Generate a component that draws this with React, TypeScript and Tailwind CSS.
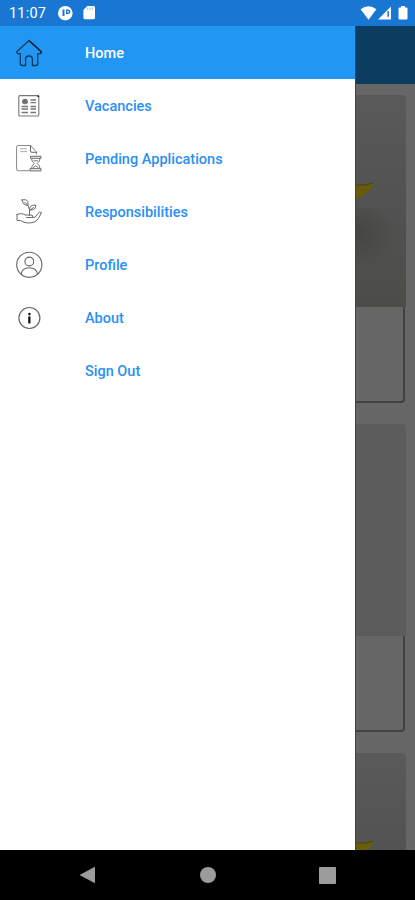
import React from "react";
import clsx from "clsx";

const HomeIcon = () => (
  <svg
    viewBox="0 0 30 30"
    className="w-[30px] h-[30px]"
    fill="none"
    stroke="#0d3c61"
    strokeWidth="1.3"
    strokeLinejoin="round"
  >
    <path d="M15 2.5 L3 13.4 Q2.2 14.8 3.6 15.6 H6.3 V25.5 Q6.3 27.5 8.3 27.5 H11.6 V20.5 Q11.8 18 15 18 Q18.2 18 18.4 20.5 V27.5 H21.7 Q23.7 27.5 23.7 25.500 V15.6 H26.4 Q27.8 14.8 27 13.4 Z" />
    <path d="M15 2.5 L27 13.4 Q27.8 14.8 26.4 15.6" stroke="#0a2338" />
  </svg>
);

const VacanciesIcon = () => (
  <svg
    viewBox="0 0 30 30"
    className="w-[30px] h-[30px]"
    fill="none"
    stroke="#777"
    strokeWidth="1.1"
  >
    <rect x="4.8" y="4.6" width="20" height="20.4" rx="1" />
    <circle cx="11" cy="10.5" r="2.3" fill="#666" />
    <path
      d="M8 11h6M16.5 9h5.5M16.5 11.6h5.5M7.5 15.5h6.5M16.5 15.5h5.5M7.5 18h6.5M16.5 18h5.5M7.5 21.5h6.5M16.5 21.5h5.500"
      strokeWidth="1.4"
    />
    <path d="M23.500 5.3h1.6" stroke="#111" strokeWidth="1.5" />
  </svg>
);

const PendingIcon = () => (
  <svg
    viewBox="0 0 30 30"
    className="w-[30px] h-[30px]"
    fill="none"
    stroke="#888"
    strokeWidth="1"
  >
    <path d="M15.5 26.700H4.200Q2.600 26.700 2.600 25V3Q2.600 1.500 4.200 1.500H16.500L22.500 8V10.500" />
    <path d="M16.500 1.500V7Q16.500 8.300 18 8.300H22.500" stroke="#666" />
    <path d="M6 4.800h7M6 7.600h7" stroke="#aaa" />
    <path d="M16.500 12.300h10.500v2h-10.500zM16 24.700h11v2.200h-11z" stroke="#666" />
    <path
      d="M17.500 14.300Q17.500 17.500 20.300 19.500Q17.500 21.500 17.500 24.700M26 14.300Q26 17.500 23.200 19.500Q26 21.500 26 24.700M19.500 16.800h4.500M19 23.800l2.700-2 2.700 2"
      stroke="#777"
    />
  </svg>
);

const ResponsibilitiesIcon = () => (
  <svg
    viewBox="0 0 30 30"
    className="w-[30px] h-[30px]"
    fill="none"
    stroke="#6a6a6a"
    strokeWidth="1"
    strokeLinecap="round"
    strokeLinejoin="round"
  >
    <path d="M8 3Q12.500 1.800 13.800 4.500L14 8.300Q9 8.600 8 3zM10.500 5l3.500 3.500 1.500 4V18.500" />
    <path d="M15.500 13Q14.500 8.300 21.500 8Q22.800 13.300 15.500 13zM15.500 13.500l4-3" />
    <path d="M3 17.500Q8 15.600 11 18H17Q20 18.400 18.500 20.500H12.500" />
    <path d="M3 17.500V23.500H6.500Q13 27.700 21 24.800Q24.500 23 27.500 15.500Q25.500 13.800 23.500 17L21 20.400H18.500" />
  </svg>
);

const ProfileIcon = () => (
  <svg
    viewBox="0 0 30 30"
    className="w-[30px] h-[30px]"
    fill="none"
    stroke="#666"
    strokeWidth="1.1"
  >
    <circle cx="15.3" cy="14.8" r="12.6" />
    <circle cx="15.300" cy="11.5" r="4.4" />
    <path d="M7 24.300Q8 17.8 15.3 17.8Q22.6 17.8 23.6 24.3" />
  </svg>
);

const AboutIcon = () => (
  <svg viewBox="0 0 30 30" className="w-[30px] h-[30px]" fill="none">
    <circle cx="15.4" cy="15" r="10.5" stroke="#666" strokeWidth="1.2" />
    <circle cx="15.4" cy="11.1" r="1.3" fill="#111" />
    <path d="M14.200 13.4h2.3v7h-2.300z" fill="#111" />
  </svg>
);

const menuItems = [
  { label: "Home", icon: <HomeIcon />, active: true },
  { label: "Vacancies", icon: <VacanciesIcon /> },
  { label: "Pending Applications", icon: <PendingIcon /> },
  { label: "Responsibilities", icon: <ResponsibilitiesIcon /> },
  { label: "Profile", icon: <ProfileIcon /> },
  { label: "About", icon: <AboutIcon /> },
  { label: "Sign Out", icon: null },
];

const StatusBar = () => (
  <header className="flex h-[26px] shrink-0 items-center justify-between bg-[#1976d2] pl-[9px] pr-[7px] text-white">
    <div className="flex items-center">
      <span className="w-[49px] pt-[2px] text-[14.5px] leading-[26px] tracking-[0.2px]">11:07</span>
      <svg viewBox="0 0 16 16" className="w-4 h-4">
        <circle cx="7.3" cy="8.2" r="7.3" fill="#fff" />
        <path d="M4.500 4.500h2v6.500h-2zM8 4.500h2q2.500.2 2.500 2.200t-2.500 2.300h-2z" fill="#1976d2" />
        <path d="M9.300 5.900h1.500v1.500h-1.500z" fill="#fff" />
      </svg>
      <svg viewBox="0 0 14 16" className="ml-[9px] w-3.5 h-4">
        <path d="M4.200 1H10.500Q12 1 12 2.500V12.800Q12 14.200 10.500 14.200H1.800Q.4 14.200.4 12.800V5z" fill="#fff" />
        <path d="M4.700 2.600v2.200M7 2.600v2.200M9.300 2.600v2.200" stroke="#8ab9ea" />
      </svg>
    </div>
    <div className="flex items-center">
      <svg viewBox="0 0 17 16" className="w-[17px] h-4">
        <path d="M.6 4.200Q8.500-1.500 16.400 4.200L8.500 14.800z" fill="#fff" />
      </svg>
      <svg viewBox="0 0 14 16" className="ml-px w-3.5 h-4">
        <path d="M13 1.500V14.500H0z" fill="#fff" />
        <path d="M10.200 6v5.800" stroke="#1976d2" strokeWidth="1.500" />
      </svg>
      <svg viewBox="0 0 10 16" className="ml-[6px] w-2.5 h-4">
        <path d="M3 1h4v1.500h1.500q1 0 1 1V13.500q0 1-1 1h-7q-1 0-1-1V3.500q0-1 1-1H3z" fill="#fff" />
      </svg>
    </div>
  </header>
);

const Drawer = () => (
  <nav className="w-[355px] shrink-0 bg-white">
    {menuItems.map((item) => (
      <div
        key={item.label}
        className={clsx(
          "flex h-[53px] items-center pl-[14px] text-[14.5px] font-medium",
          item.active ? "bg-[#2196f3] text-white" : "text-[#2b90f3]"
        )}
      >
        <div className="w-[71px]">{item.icon}</div>
        <span className="pt-[2px]">{item.label}</span>
      </div>
    ))}
  </nav>
);

const Petal = () => (
  <svg viewBox="0 0 20 26" className="w-5 h-[26px]">
    <path d="M0 3.500Q10 4.500 17.500 1.500Q16.500 8 10 12Q5 15 0 19z" fill="#685b0b" />
    <path d="M0 4Q10 5 17 2" stroke="#4c430c" strokeWidth="1" fill="none" />
  </svg>
);

const Card = ({ photo = false }: { photo?: boolean }) => (
  <div className="mb-[21px] w-[50px] shrink-0">
    <div
      className={clsx(
        "h-[212px] w-[50px] rounded-tr-sm",
        photo
          ? "bg-linear-to-b from-[#5a5a5a] via-[#525252] to-[#4c4d48] pt-[86px]"
          : "bg-[#5c5c5c]"
      )}
    >
      {photo && (
        <>
          <Petal />
          <div className="mt-px h-[80px] w-[48px] bg-radial-[40px_34px_at_0%_32%] from-[#454541] to-transparent" />
        </>
      )}
    </div>
    <div className="h-[96px] w-[49px] rounded-br-sm border-r-2 border-b-2 border-[#424242] bg-[#666]" />
  </div>
);

const App = () => {
  return (
    <div className="flex h-[900px] w-[415px] flex-col overflow-hidden bg-black font-['Roboto',sans-serif]">
      <StatusBar />
      <main className="flex h-[824px] shrink-0 overflow-hidden">
        <Drawer />
        <div className="flex min-w-0 flex-1 flex-col overflow-hidden border-l border-[#444] bg-[#666]">
          <div className="mb-[11px] h-[58px] shrink-0 bg-[#0d3c61]" />
          <Card photo />
          <Card />
          <Card photo />
        </div>
      </main>
      {/* Android navigation bar */}
      <footer className="flex h-[50px] items-center pl-[79px]">
        <svg viewBox="0 0 17 18" className="w-[17px] h-[18px]">
          <path d="M16 .8V17.200L.5 9z" fill="#9c9c9c" />
        </svg>
        <div className="ml-[104px] h-4 w-4 rounded-full bg-[#9c9c9c]" />
        <div className="ml-[103px] h-[17px] w-[17px] rounded-[1px] bg-[#9c9c9c]" />
      </footer>
    </div>
  );
};

export default App;
